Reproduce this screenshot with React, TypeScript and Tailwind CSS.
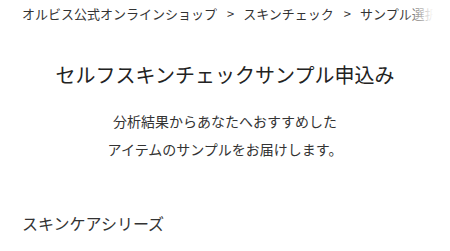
const crumbs = ["オルビス公式オンラインショップ", "スキンチェック", "サンプル選択"];

export default function App() {
  return (
    <div
      className="min-h-[251px] bg-white text-[#333]"
      style={{ fontFamily: '"Noto Sans CJK JP", "Noto Sans", sans-serif' }}
    >
      <nav className="relative h-[28px] overflow-hidden">
        <ol className="flex h-full items-center whitespace-nowrap pl-[22px] text-[13px] leading-4">
          {crumbs.map((c, i) => (
            <li key={c} className="flex items-center">
              {i > 0 && <span className="ml-[10px] mr-[9px]">&gt;</span>}
              <span>{c}</span>
            </li>
          ))}
        </ol>
        <div className="pointer-events-none absolute inset-y-0 right-0 w-[48px] bg-[linear-gradient(to_right,rgba(255,255,255,0)_0%,#fff_65%)]" />
      </nav>

      <h1 className="mt-[32px] text-center text-[20px] leading-[30px] font-normal text-[#222]">
        セルフスキンチェックサンプル申込み
      </h1>
      <p className="mt-[17px] text-center text-[14px] leading-[28px]">
        分析結果からあなたへおすすめした
        <br />
        アイテムのサンプルをお届けします。
      </p>

      <h2 className="mt-[48px] pl-[22px] text-[16px] leading-[24px] font-normal">
        スキンケアシリーズ
      </h2>
    </div>
  );
}
